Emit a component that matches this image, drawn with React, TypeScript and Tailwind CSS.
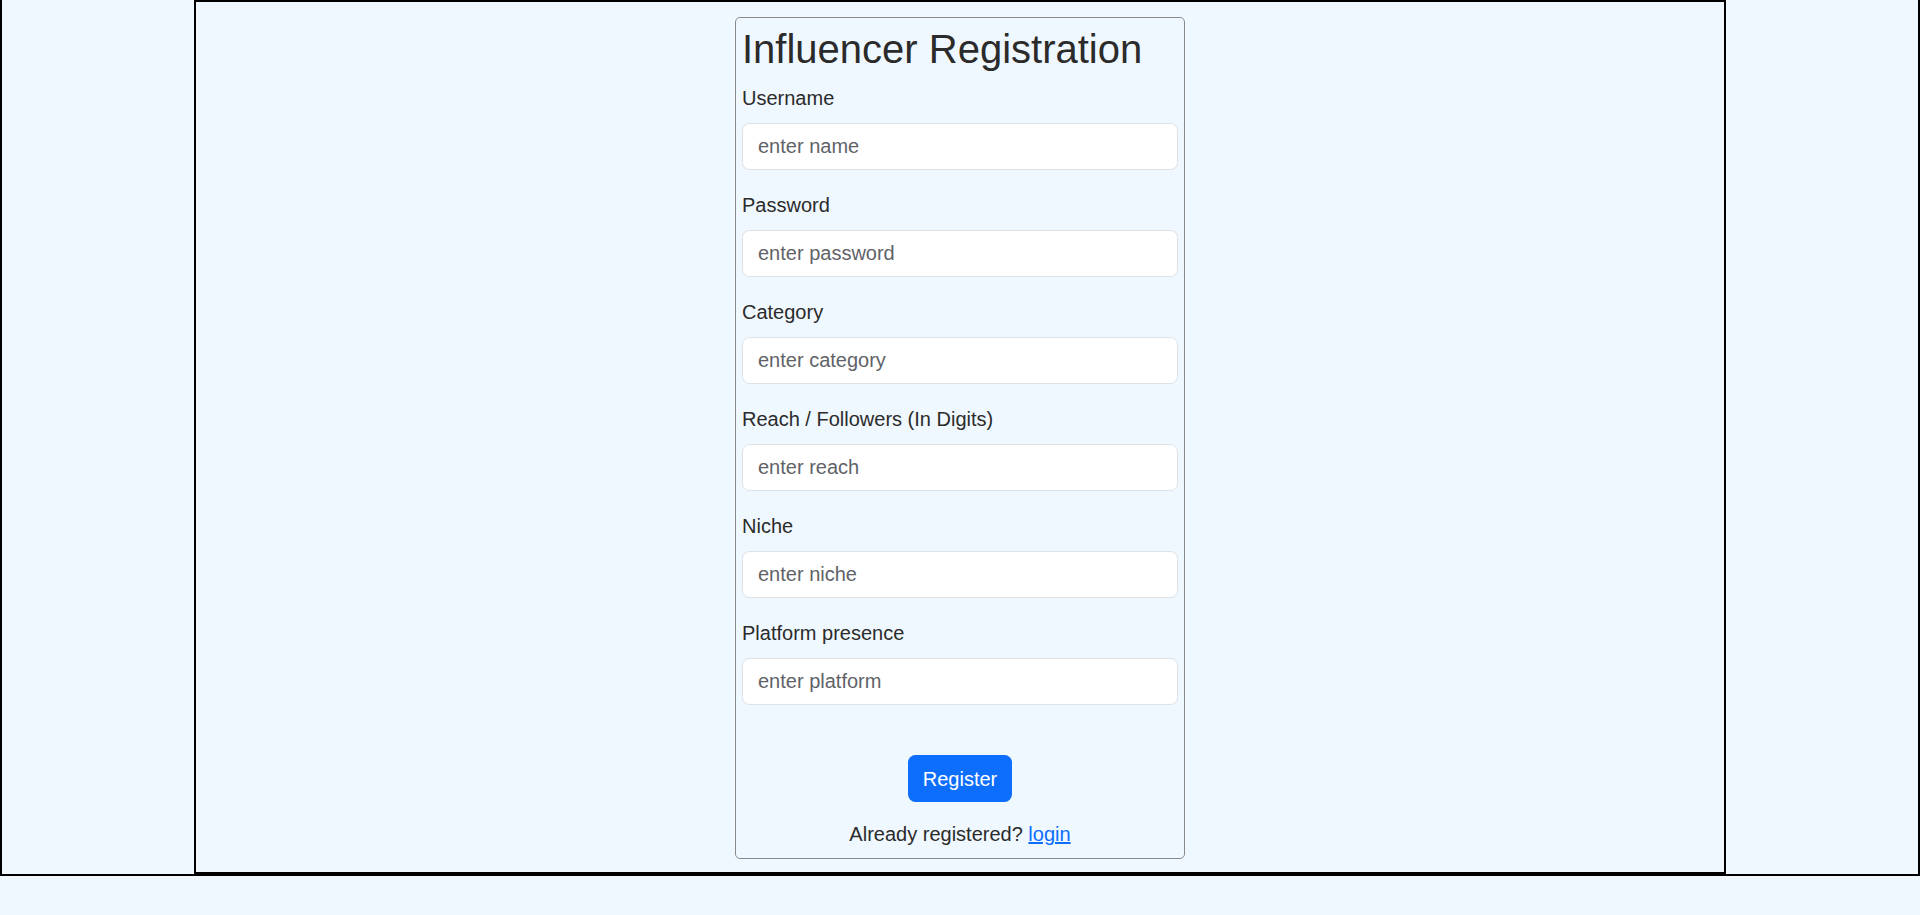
export default function App() {
  const fields = [
    { label: "Username", placeholder: "enter name", type: "text" },
    { label: "Password", placeholder: "enter password", type: "password" },
    { label: "Category", placeholder: "enter category", type: "text" },
    { label: "Reach / Followers (In Digits)", placeholder: "enter reach", type: "text" },
    { label: "Niche", placeholder: "enter niche", type: "text" },
    { label: "Platform presence", placeholder: "enter platform", type: "text" },
  ];

  return (
    <div className="min-h-screen bg-[#f0f8ff] font-['Liberation_Sans',Arial,sans-serif] text-[#2b2b2b]">
      <div className="h-[876px] border-x-2 border-b-2 border-black">
        <div className="mx-[192px] h-[874px] border-2 border-black">
          <form
            className="mx-auto mt-[15px] w-[450px] rounded-[5px] border border-[#8a8a8a] px-[6px] pt-[7px] pb-[9px]"
            onSubmit={(e) => e.preventDefault()}
          >
            <h2 className="mb-[10px] text-[40px] leading-[48px]">Influencer Registration</h2>
            {fields.map((f) => (
              <div key={f.label} className="mb-[20px]">
                <label className="mb-[10px] block text-[20px] leading-[30px]">{f.label}</label>
                <input
                  type={f.type}
                  placeholder={f.placeholder}
                  className="block h-[47px] w-full rounded-[7.5px] border border-[#dee2e6] bg-white px-[15px] text-[20px] leading-[30px] text-[#212529] outline-none placeholder:text-[#5f6368]"
                />
              </div>
            ))}
            <div className="flex justify-center pt-[30px]">
              <button
                type="submit"
                className="h-[47px] rounded-[7.5px] bg-[#0d6efd] px-[15px] text-[20px] leading-[30px] text-white"
              >
                Register
              </button>
            </div>
            <p className="mt-[17px] text-center text-[20px] leading-[30px]">
              Already registered?{" "}
              <a href="#" className="text-[#0d6efd] underline">
                login
              </a>
            </p>
          </form>
        </div>
      </div>
    </div>
  );
}
